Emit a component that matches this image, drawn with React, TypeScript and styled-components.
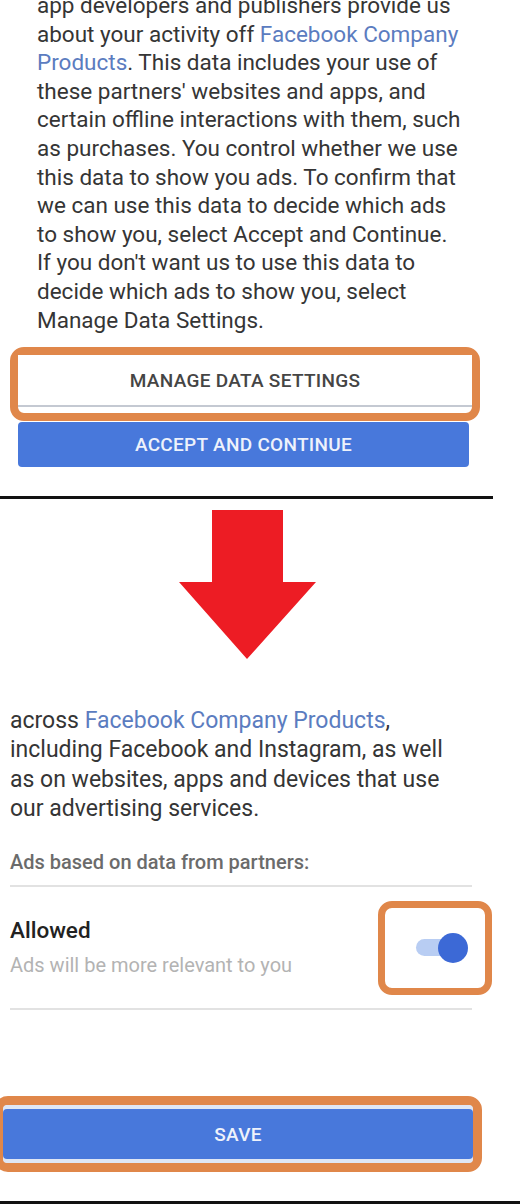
import styled, { createGlobalStyle } from 'styled-components';

const GlobalStyle = createGlobalStyle`
  html, body {
    margin: 0;
    padding: 0;
    background: #ffffff;
    overflow: hidden;
  }
  * {
    box-sizing: border-box;
  }
`;

const Page = styled.div`
  width: 520px;
  height: 1204px;
  display: flex;
  flex-direction: column;
  font-family: 'Roboto', 'Noto Sans', sans-serif;
  color: #333333;
  overflow: hidden;
`;

const TopPanel = styled.section`
  display: flex;
  flex-direction: column;
`;

const Paragraph = styled.p<{ indent: number; lineHeight: number; offset: number; size: number }>`
  margin: ${(props) => props.offset}px 0 0 ${(props) => props.indent}px;
  font-size: ${(props) => props.size}px;
  line-height: ${(props) => props.lineHeight}px;
  color: #353535;
  white-space: nowrap;
`;

const Link = styled.span`
  color: #5b7cc0;
`;

const Highlight = styled.div<{ width: number; left: number; top: number; edge: number }>`
  width: ${(props) => props.width}px;
  margin: ${(props) => props.top}px 0 0 ${(props) => props.left}px;
  border: ${(props) => props.edge}px solid #e0874a;
  border-radius: 14px;
`;

const ManageButton = styled.button`
  display: block;
  width: 100%;
  height: 52px;
  margin-bottom: 6px;
  border: none;
  border-bottom: 2px solid #c4c9d2;
  background: #ffffff;
  font-family: 'Roboto', sans-serif;
  font-size: 19px;
  font-weight: 500;
  color: #454545;
  letter-spacing: 0.3px;
`;

const BlueButton = styled.button<{ width: number; left: number; height: number }>`
  display: block;
  width: ${(props) => props.width}px;
  height: ${(props) => props.height}px;
  margin-left: ${(props) => props.left}px;
  border: none;
  border-radius: 4px;
  background: #4878db;
  color: #eef2fb;
  font-family: 'Roboto', sans-serif;
  font-size: 19px;
  font-weight: 500;
  letter-spacing: 0.3px;
`;

const SaveRing = styled.div`
  border-radius: 4px;
  background: #dfe6f4;
  padding: 4px 0;
`;

const Rule = styled.div<{ width: number; top: number; color: string; thickness: number }>`
  width: ${(props) => props.width}px;
  height: ${(props) => props.thickness}px;
  margin-top: ${(props) => props.top}px;
  background: ${(props) => props.color};
  flex-shrink: 0;
`;

const ArrowWrap = styled.div`
  margin: 11px 0 0 179px;
  width: 137px;
  height: 150px;
`;

const Settings = styled.section`
  margin-left: 10px;
  width: 482px;
  display: flex;
  flex-direction: column;
`;

const SectionTitle = styled.div`
  margin-top: 27px;
  font-size: 20px;
  line-height: 24px;
  font-weight: 500;
  color: #6b6b6b;
`;

const OptionRow = styled.div`
  height: 121px;
  display: flex;
  align-items: center;
  justify-content: space-between;
`;

const OptionText = styled.div`
  display: flex;
  flex-direction: column;
  gap: 5px;
`;

const OptionTitle = styled.div`
  font-size: 22.5px;
  line-height: 30px;
  font-weight: 500;
  color: #222222;
`;

const OptionHint = styled.div`
  font-size: 20px;
  line-height: 30px;
  color: #b3b3b3;
`;

const ToggleBox = styled.div`
  width: 114px;
  height: 94px;
  border: 7px solid #e0874a;
  border-radius: 14px;
  display: flex;
  align-items: center;
  justify-content: center;
`;

const Switch = styled.div`
  width: 48px;
  height: 30px;
  display: flex;
  align-items: center;
  margin-left: 10px;
`;

const Track = styled.div`
  width: 44px;
  height: 17px;
  border-radius: 9px;
  background: #b8cdf3;
  display: flex;
  align-items: center;
  justify-content: flex-end;
`;

const Thumb = styled.div`
  width: 30px;
  height: 30px;
  border-radius: 50%;
  background: #3c69d6;
  margin-right: -8px;
  flex-shrink: 0;
`;

const Bottom = styled.div`
  margin-top: auto;
`;

export default function App() {
  return (
    <Page>
      <GlobalStyle />
      <TopPanel>
        <Paragraph indent={37} lineHeight={28.6} offset={-9} size={22.5}>
          app developers and publishers provide us<br />
          about your activity off <Link>Facebook Company</Link><br />
          <Link>Products</Link>. This data includes your use of<br />
          these partners' websites and apps, and<br />
          certain offline interactions with them, such<br />
          as purchases. You control whether we use<br />
          this data to show you ads. To confirm that<br />
          we can use this data to decide which ads<br />
          to show you, select Accept and Continue.<br />
          If you don't want us to use this data to<br />
          decide which ads to show you, select<br />
          Manage Data Settings.
        </Paragraph>
        <Highlight width={470} left={10} top={13} edge={8}>
          <ManageButton>MANAGE DATA SETTINGS</ManageButton>
        </Highlight>
        <BlueButton width={451} left={18} height={45} style={{ marginTop: 1 }}>
          ACCEPT AND CONTINUE
        </BlueButton>
        <Rule width={493} top={29} color="#111111" thickness={3} />
      </TopPanel>

      <ArrowWrap>
        <svg width="137" height="150" viewBox="0 0 137 150">
          <path d="M33 0 H104 V72 H137 L68 149 L0 72 H33 Z" fill="#ed1c24" />
        </svg>
      </ArrowWrap>

      <Settings>
        <Paragraph indent={0} lineHeight={29.3} offset={46} size={23}>
          across <Link>Facebook Company Products</Link>,<br />
          including Facebook and Instagram, as well<br />
          as on websites, apps and devices that use<br />
          our advertising services.
        </Paragraph>
        <SectionTitle>Ads based on data from partners:</SectionTitle>
        <Rule width={462} top={11} color="#e2e2e2" thickness={2} />
        <OptionRow>
          <OptionText>
            <OptionTitle>Allowed</OptionTitle>
            <OptionHint>Ads will be more relevant to you</OptionHint>
          </OptionText>
          <ToggleBox>
            <Switch>
              <Track>
                <Thumb />
              </Track>
            </Switch>
          </ToggleBox>
        </OptionRow>
        <Rule width={462} top={0} color="#e2e2e2" thickness={2} />
      </Settings>

      <Highlight width={488} left={-6} top={86} edge={9}>
        <SaveRing>
          <BlueButton width={470} left={0} height={50}>SAVE</BlueButton>
        </SaveRing>
      </Highlight>

      <Bottom>
        <Rule width={520} top={0} color="#111111" thickness={3} />
      </Bottom>
    </Page>
  );
}
